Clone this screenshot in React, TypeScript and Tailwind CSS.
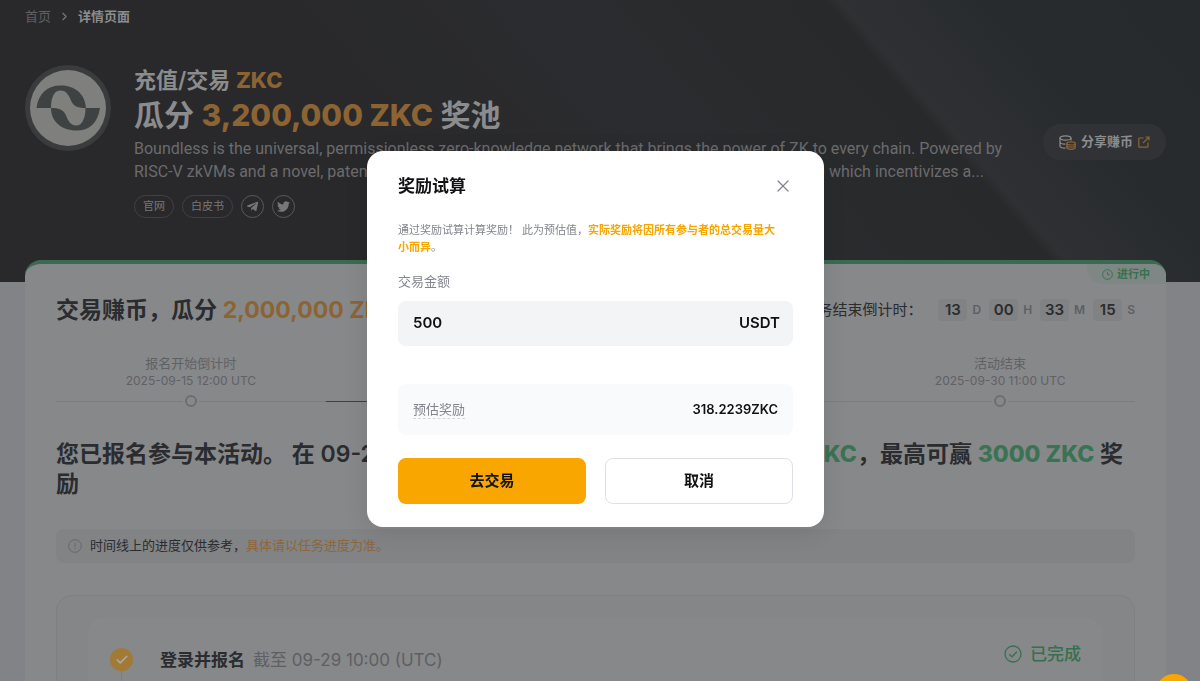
import { useState } from 'react';
import type { ReactNode } from 'react';
import { Check, ChevronRight, SquareArrowOutUpRight, X } from 'lucide-react';
import { FaTelegramPlane, FaTwitter } from 'react-icons/fa';

const REWARD_RATE = 0.6364478;

const STAGES = [
  { label: '报名开始倒计时', date: '2025-09-15 12:00 UTC', active: false },
  { label: '活动开始', date: '2025-09-15 12:00 UTC', active: true },
  { label: '报名截止', date: '2025-09-29 10:00 UTC', active: false },
  { label: '活动结束', date: '2025-09-30 11:00 UTC', active: false },
];

const COUNTDOWN = [
  { value: '13', unit: 'D' },
  { value: '00', unit: 'H' },
  { value: '33', unit: 'M' },
  { value: '15', unit: 'S' },
];

function TokenLogo() {
  return (
    <svg viewBox="0 0 86 86" className="size-[86px] shrink-0" aria-hidden="true">
      <circle cx="43" cy="43" r="43" fill="#3a3b3c" />
      <circle cx="43" cy="43" r="38" fill="#7f807d" />
      <g transform="translate(-5.5 -5.5)">
        <path
          d="M17 48.5C19 34 28 26 41 26C55 26 65.5 34 66.5 48.5H80.5C78 64 70 71 57 71C42 71 31.5 62 31.5 48.5Z"
          fill="#3f4242"
        />
        <path
          d="M31.5 48.5C31.5 37 35 31 41 31C47 31 49.5 36 51.5 41C53.5 46 57 48.5 66 48.5C66 60 62 66 57 66C51 66 48.5 61 46.5 56C44.5 51 41 48.5 31.5 48.5Z"
          fill="#7f807d"
        />
      </g>
    </svg>
  );
}

function CoinsIcon() {
  return (
    <svg viewBox="0 0 17 15" className="h-[15px] w-[17px]" fill="none" aria-hidden="true">
      <g stroke="#8b8c8d" strokeWidth="1.2">
        <ellipse cx="6.5" cy="3" rx="5.5" ry="2.2" />
        <path d="M1 3v8c0 1.2 2.4 2.2 5.5 2.2M12 3v2.6M1 7c0 1.2 2.4 2.2 5.5 2.2" />
      </g>
      <g stroke="#8c6434" strokeWidth="1.2">
        <ellipse cx="12" cy="8.4" rx="4.2" ry="1.6" />
        <path d="M7.8 8.4v4.2c0 .9 1.9 1.7 4.2 1.7s4.2-.8 4.2-1.7V8.4M7.8 10.5c0 .9 1.9 1.6 4.2 1.6s4.2-.7 4.2-1.6" />
      </g>
    </svg>
  );
}

function ShareArrowIcon() {
  return (
    <svg
      viewBox="0 0 12 12"
      className="size-3 text-[#8c6434]"
      fill="none"
      stroke="currentColor"
      strokeWidth="1.2"
      aria-hidden="true"
    >
      <path d="M5.5 2H1.6C1 2 .8 2.200 .8 2.800v7.600c0 .6.2.8.8.8h7.600c.6 0 .8-.2.8-.8V6.500" />
      <path d="M5 7l6-6M7.500 1H11v3.500" />
    </svg>
  );
}

function Chip({ children }: { children: ReactNode }) {
  return (
    <a
      href="#"
      className="flex h-[23px] items-center rounded-full border border-[#414144] px-2 text-[11px] text-[#77777a]"
    >
      {children}
    </a>
  );
}

function RoundLink({ label, children }: { label: string; children: ReactNode }) {
  return (
    <a
      href="#"
      aria-label={label}
      className="flex size-[23px] items-center justify-center rounded-full border border-[#5a5a5c] text-[#77777a]"
    >
      {children}
    </a>
  );
}

function Hero() {
  return (
    <header className="h-[282px] bg-[linear-gradient(49deg,#29292b_0%,#29292b_35%,#2b2c2f_55%,#28292a_74%,#2f3033_75%,#272b2d_86%,#262a2c_100%)] pr-[34px] pl-[25px]">
      <nav className="flex h-[33px] items-center gap-[7px] text-[13px]">
        <a href="#" className="text-[#5f6063]">
          首页
        </a>
        <ChevronRight size={13} className="text-[#77787a]" />
        <span className="font-semibold text-[#8b8c8d]">详情页面</span>
      </nav>
      <div className="flex items-start gap-[23px] pt-8">
        <TokenLogo />
        <div className="max-w-[870px] min-w-0 flex-1">
          <h1 className="font-semibold text-[#8b8c8d]">
            <span className="block text-[22px] leading-[30px]">
              充值/交易 <b className="font-extrabold text-[#8c6434]">ZKC</b>
            </span>
            <span className="block text-[30px] leading-10">
              瓜分 <b className="font-extrabold text-[#8c6434]">3,200,000 ZKC</b> 奖池
            </span>
          </h1>
          <p className="mt-[2px] font-['Roboto','Noto_Sans_CJK_SC',sans-serif] text-[16px] leading-[23px] text-[#6b6b6e]">
            Boundless is the universal, permissionless zero-knowledge network that brings the power
            of ZK to every chain. Powered by RISC-V zkVMs and a novel, patent-pending mechanism
            known as Proof of Verifiable Work (PoVW) which incentivizes a...
          </p>
          <div className="mt-3 flex items-center gap-2">
            <Chip>官网</Chip>
            <Chip>白皮书</Chip>
            <RoundLink label="Telegram">
              <FaTelegramPlane size={13} />
            </RoundLink>
            <RoundLink label="Twitter">
              <FaTwitter size={13} />
            </RoundLink>
          </div>
        </div>
        <button
          type="button"
          className="mt-[59px] ml-auto flex h-9 shrink-0 items-center gap-[5px] rounded-full bg-[#313235] px-4 text-[13px] font-semibold text-[#8b8c8d]"
        >
          <CoinsIcon />
          分享赚币
          <ShareArrowIcon />
        </button>
      </div>
    </header>
  );
}

function Countdown() {
  return (
    <div className="flex items-center">
      <span className="mr-4 text-[15px] text-[#2b2c2f]">任务结束倒计时：</span>
      <div className="flex items-center gap-2">
        {COUNTDOWN.map((c) => (
          <span key={c.unit} className="flex items-center gap-[5px]">
            <b className="flex h-[22px] w-[29px] items-center justify-center rounded bg-[#818284] text-[15px] font-semibold text-[#2b2c2f]">
              {c.value}
            </b>
            <span className="text-[12px] font-semibold text-[#5e5f63]">{c.unit}</span>
          </span>
        ))}
      </div>
    </div>
  );
}

function Timeline() {
  return (
    <ol className="mt-[29px] grid grid-cols-4">
      {STAGES.map((s) => (
        <li key={s.label} className="flex flex-col items-center">
          <span className="text-[13px] leading-[18px] text-[#606165]">{s.label}</span>
          <span className="text-[12px] leading-[17px] text-[#606165]">{s.date}</span>
          <span className="mt-[6px] flex w-full items-center gap-[2px]">
            <i className={`h-px flex-1 ${s.active ? 'bg-[#3f4043]' : 'bg-[#7c7d7f]'}`} />
            <i className="size-3 rounded-full border-2 border-[#6d6e71]" />
            <i className={`h-px flex-1 ${s.active ? 'bg-[#3f4043]' : 'bg-[#7c7d7f]'}`} />
          </span>
        </li>
      ))}
    </ol>
  );
}

function Activity() {
  return (
    <main className="relative -mt-[22px] mr-[34px] ml-[25px] rounded-t-2xl border-t-4 border-[#3a6b52] bg-[#87888a] px-[31px] pt-[31px]">
      <span className="absolute top-0 right-0 flex h-5 items-center gap-1 rounded-tr-xl rounded-bl-2xl bg-[#7f8785] pr-4 pl-[15px] text-[11px] font-semibold text-[#35704f]">
        <svg
          viewBox="0 0 12 12"
          className="size-[11px]"
          fill="none"
          stroke="currentColor"
          aria-hidden="true"
        >
          <circle cx="6" cy="6" r="5.3" />
          <path d="M6 3v3.2h2.5" />
        </svg>
        进行中
      </span>

      <div className="flex items-center justify-between">
        <h2 className="text-[23px] leading-[30px] font-semibold text-[#2b2c2f]">
          交易赚币，瓜分 <b className="font-bold text-[#8c6434]">2,000,000 ZKC</b>
        </h2>
        <Countdown />
      </div>

      <Timeline />

      <h2 className="mt-8 text-[23px] leading-[30px] font-semibold text-[#2b2c2f]">
        您已报名参与本活动。 在 09-29 10:00 (UTC) 前，交易瓜分{' '}
        <b className="font-extrabold text-[#3a7353]">2,000,000 ZKC</b>，最高可赢{' '}
        <b className="font-extrabold text-[#3a7353]">3000 ZKC</b> 奖励
      </h2>

      <p className="mt-[30px] flex h-[34px] items-center rounded-lg bg-[#818385] px-3 text-[13px] text-[#2b2c2f]">
        <svg
          viewBox="0 0 14 14"
          className="mr-2 size-[14px]"
          fill="none"
          stroke="#66676a"
          aria-hidden="true"
        >
          <circle cx="7" cy="7" r="6.3" />
          <path d="M7 3.8v4M7 9v1.2" />
        </svg>
        时间线上的进度仅供参考，
        <span className="text-[#8f653a]">具体请以任务进度为准。</span>
      </p>

      <section className="mt-8 rounded-2xl border border-[#7f8082] bg-[#858688] px-[31px] pt-[22px]">
        <div className="flex items-start rounded-2xl bg-[#87888a] px-[22px] pt-[30px]">
          <div className="flex flex-col items-center">
            <span className="flex size-[23px] items-center justify-center rounded-full bg-[#a17a35] text-[#a9a9aa]">
              <Check size={14} strokeWidth={3} />
            </span>
            <i className="h-24 w-px bg-[#a17a35]" />
          </div>
          <h3 className="ml-[27px] text-[17px] leading-6 font-semibold text-[#2b2c2f]">
            登录并报名
            <span className="ml-2 font-normal text-[#5e5f63]">截至 09-29 10:00 (UTC)</span>
          </h3>
          <span className="-mt-[6px] ml-auto flex items-center gap-2 text-[17px] leading-6 font-medium text-[#35704f]">
            <svg
              viewBox="0 0 18 18"
              className="size-[18px]"
              fill="none"
              stroke="currentColor"
              strokeWidth="1.3"
              aria-hidden="true"
            >
              <circle cx="9" cy="9" r="8" />
              <path d="M5.2 9.2l2.7 2.6 5-5" />
            </svg>
            已完成
          </span>
        </div>
      </section>
    </main>
  );
}

function CalculatorDialog({ onClose }: { onClose: () => void }) {
  const [amount, setAmount] = useState('500');
  const reward = (Number(amount) || 0) * REWARD_RATE;

  return (
    <div className="fixed inset-0 z-50 flex items-center justify-center pr-[9px] pb-[3px]">
      <div
        role="dialog"
        aria-modal="true"
        aria-labelledby="calc-title"
        className="w-full max-w-[457px] rounded-2xl bg-white px-[31px] py-[23px] text-[#121214] shadow-[0_4px_24px_rgba(0,0,0,0.1)]"
      >
        <div className="flex h-6 items-center justify-between">
          <h2 id="calc-title" className="text-[17px] leading-6 font-semibold">
            奖励试算
          </h2>
          <button type="button" aria-label="关闭" onClick={onClose} className="text-[#81858c]">
            <X size={20} strokeWidth={1.5} />
          </button>
        </div>

        <p className="mt-6 pr-3 text-[11px] leading-[17px] text-[#81858c]">
          通过奖励试算计算奖励！ 此为预估值，
          <b className="font-semibold text-[#f7a600]">
            实际奖励将因所有参与者的总交易量大小而异
          </b>
          。
        </p>

        <label htmlFor="amount" className="mt-[15px] block text-[13px] leading-5 text-[#81858c]">
          交易金额
        </label>
        <div className="mt-[10px] flex h-[45px] items-center rounded-lg bg-[#f3f4f6] pr-[13px] pl-[15px] text-[15px] font-semibold">
          <input
            id="amount"
            value={amount}
            onChange={(e) => setAmount(e.target.value)}
            className="min-w-0 flex-1 bg-transparent outline-none"
          />
          <span>USDT</span>
        </div>

        <div className="mt-[38px] flex h-[51px] items-center justify-between rounded-lg bg-[#f9fafc] px-[15px] text-[13px]">
          <span className="border-b border-dashed border-[#d5d7dc] leading-[18px] text-[#81858c]">
            预估奖励
          </span>
          <span className="font-semibold">{reward.toFixed(4)}ZKC</span>
        </div>

        <div className="mt-[23px] grid grid-cols-2 gap-[19px] text-[15px] font-semibold">
          <button type="button" className="h-[46px] rounded-lg bg-[#f9a600]">
            去交易
          </button>
          <button
            type="button"
            onClick={onClose}
            className="h-[46px] rounded-lg border border-[#dfe0e6] bg-white"
          >
            取消
          </button>
        </div>
      </div>
    </div>
  );
}

export default function App() {
  const [open, setOpen] = useState(true);

  return (
    <div
      lang="zh-CN"
      className="h-screen overflow-hidden bg-[#828387] font-['Inter','Noto_Sans_CJK_SC',sans-serif]"
    >
      <Hero />
      <Activity />
      <button
        type="button"
        aria-label="奖励试算"
        onClick={() => setOpen(true)}
        className="fixed right-2 -bottom-[29px] size-9 rounded-full bg-[#f9a600]"
      />
      {open ? <CalculatorDialog onClose={() => setOpen(false)} /> : null}
    </div>
  );
}
